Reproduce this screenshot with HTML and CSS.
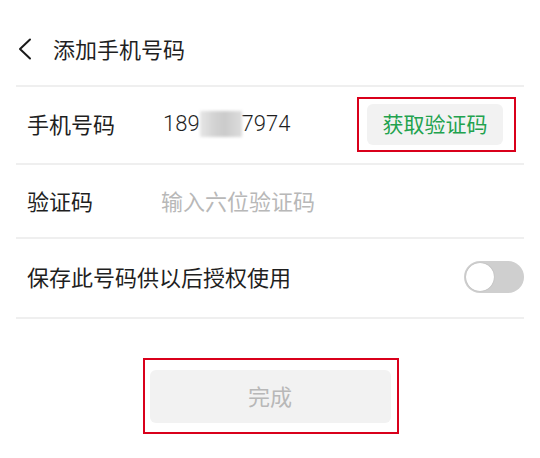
FILE: index.html
```html
<!DOCTYPE html>
<html lang="zh-CN">
<head>
<meta charset="utf-8">
<title>添加手机号码</title>
<link rel="stylesheet" href="styles.css">
</head>
<body>
<div class="page">
  <header class="header">
    <svg class="back" width="16" height="22" viewBox="0 0 16 22" aria-hidden="true">
      <polyline points="13,1.5 3,11 13,20.5" fill="none" stroke="#1a1a1a" stroke-width="2" stroke-linecap="round" stroke-linejoin="round"/>
    </svg>
    <h1 class="title">添加手机号码</h1>
  </header>
  <div class="list">
    <div class="row row-phone">
      <span class="label">手机号码</span>
      <span class="value phone">189<span class="mask"></span>7974</span>
      <div class="mark mark-code">
        <button class="btn-code">获取验证码</button>
      </div>
    </div>
    <div class="row row-code">
      <span class="label">验证码</span>
      <span class="value placeholder">输入六位验证码</span>
    </div>
    <div class="row row-save">
      <span class="label-long">保存此号码供以后授权使用</span>
      <span class="switch"><span class="knob"></span></span>
    </div>
  </div>
  <div class="footer">
    <div class="mark mark-done">
      <button class="btn-done">完成</button>
    </div>
  </div>
</div>
</body>
</html>
```
FILE: styles.css
```css
* { box-sizing: border-box; }
html, body { margin: 0; padding: 0; background: #fff; }
body {
  font-family: "Noto Sans CJK SC", "Noto Sans", sans-serif;
  color: #1f1f1f;
  font-size: 22px;
}
.page { width: 540px; }
.header {
  height: 85px;
  padding: 10px 0 0 16px;
  display: flex;
  align-items: center;
  margin: 0 16px 0 0;
}
.back { display: block; margin: 2px 0 0 1px; }
.title {
  margin: 0 0 0 20px;
  font-size: 22px;
  font-weight: normal;
  line-height: 30px;
}
.list { margin: 0 16px; border-top: 2px solid #efefef; }
.row {
  display: flex;
  align-items: center;
  padding-left: 11px;
  border-bottom: 2px solid #efefef;
  line-height: 30px;
}
.label, .value, .label-long { padding-bottom: 4px; }
.row-phone { height: 78px; }
.row-code { height: 74px; padding-top: 1px; }
.row-save { height: 80px; }
.label { width: 134px; flex: none; }
.value { flex: 1; }
.phone {
  display: flex;
  align-items: center;
  font-family: Roboto, "Noto Sans", sans-serif;
  font-weight: 300;
  font-size: 22px;
  padding-left: 2px;
  padding-bottom: 2px;
}
.mask {
  display: inline-block;
  width: 42px;
  height: 26px;
  background: linear-gradient(90deg, #e6e6e6 0%, #d2d2d2 35%, #cbcbcb 60%, #dcdcdc 100%);
  filter: blur(1.5px);
}
.placeholder { color: #b8b8b8; }
.mark {
  border: 2px solid #d9001b;
  display: flex;
}
.mark-code {
  margin-right: 8px;
  width: 159px;
  height: 55px;
  padding: 5px 11px 5px 8px;
  margin-bottom: 2px;
}
.btn-code {
  flex: 1;
  border: none;
  background: #f2f2f2;
  border-radius: 6px;
  color: #22a24e;
  font: inherit;
  font-size: 21px;
  padding: 0 0 3px;
  line-height: 30px;
}
.label-long { flex: 1; }
.switch {
  width: 60px;
  height: 32px;
  border-radius: 16px;
  background: #cfcfcf;
  display: flex;
  align-items: center;
  padding-left: 2px;
  margin-bottom: 2px;
}
.knob {
  width: 28px;
  height: 28px;
  border-radius: 50%;
  background: #fff;
  box-shadow: 0 0 1px rgba(0,0,0,0.3);
}
.footer {
  display: flex;
  justify-content: center;
  padding-top: 39px;
  padding-left: 1px;
}
.mark-done {
  width: 256px;
  height: 76px;
  padding: 10px 6px 9px 5px;
}
.btn-done {
  flex: 1;
  border: none;
  background: #f2f2f2;
  border-radius: 6px;
  color: #b8b8b8;
  font: inherit;
  font-size: 22px;
  padding: 0 0 4px;
}
```
